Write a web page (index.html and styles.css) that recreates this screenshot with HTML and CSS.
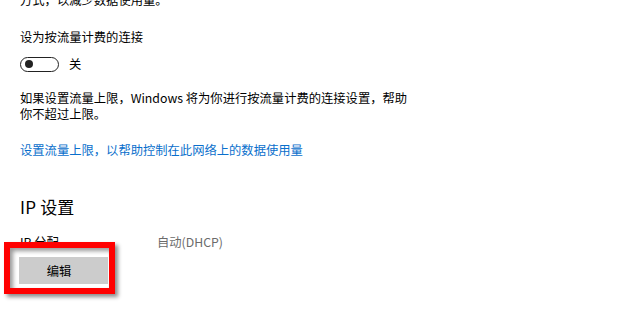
FILE: index.html
```html
<!DOCTYPE html>
<html lang="zh-CN">
<head>
<meta charset="utf-8">
<link rel="stylesheet" href="styles.css">
</head>
<body>
<main class="page">
  <p class="text first">方式，以减少数据使用量。</p>
  <p class="text title">设为按流量计费的连接</p>
  <div class="toggle-row">
    <span class="toggle"><span class="knob"></span></span>
    <span class="text">关</span>
  </div>
  <p class="text para">如果设置流量上限，Windows 将为你进行按流量计费的连接设置，帮助<br>你不超过上限。</p>
  <p class="text link">设置流量上限，以帮助控制在此网络上的数据使用量</p>
  <h2 class="heading">IP 设置</h2>
  <div class="kv">
    <span class="text">IP 分配</span>
    <span class="text value">自动(DHCP)</span>
  </div>
  <div class="btn-wrap">
    <button class="btn">编辑</button>
    <span class="highlight"></span>
  </div>
</main>
</body>
</html>
```
FILE: styles.css
```css
html, body {
  margin: 0;
  padding: 0;
  background: #ffffff;
}
body {
  width: 620px;
  height: 309px;
  overflow: hidden;
  font-family: "Noto Sans CJK SC", "Noto Sans", sans-serif;
  color: #000000;
}
.page {
  padding-left: 20px;
}
.text {
  margin: 0;
  font-size: 12.3px;
  line-height: 16.5px;
}
.first {
  margin-top: -7.75px;
}
.title {
  margin-top: 20px;
}
.toggle-row {
  margin-top: 10.75px;
  height: 16px;
  display: flex;
  align-items: center;
  gap: 10px;
}
.toggle {
  box-sizing: border-box;
  width: 39px;
  height: 15px;
  border: 1.6px solid #222;
  border-radius: 8px;
  display: flex;
  align-items: center;
  padding-left: 3.5px;
}
.knob {
  width: 8px;
  height: 8px;
  border-radius: 50%;
  background: #222;
}
.para {
  margin-top: 18.25px;
  line-height: 16.2px;
}
.link {
  margin-top: 19.5px;
  color: #0a6fcc;
}
.heading {
  margin: 37.5px 0 0;
  font-weight: normal;
  font-size: 17px;
  line-height: 22px;
  letter-spacing: 0.2px;
}
.kv {
  margin-top: 16.25px;
  display: grid;
  grid-template-columns: 137px auto;
}
.value {
  color: #6b6b6b;
}
.btn-wrap {
  position: relative;
  margin-top: 6.25px;
  margin-left: -1px;
  width: 89px;
  height: 27px;
}
.btn {
  display: block;
  width: 89px;
  height: 27px;
  border: none;
  background: #cccccc;
  color: #000;
  font-family: "Noto Sans CJK SC", sans-serif;
  font-size: 12.3px;
  padding: 0 9px 0 0;
}
.highlight {
  position: absolute;
  left: -15px;
  top: -15px;
  width: 111px;
  height: 52px;
  box-sizing: border-box;
  border: 6px solid #ff0000;
  box-shadow: 3px 3px 4px rgba(0,0,0,0.45), inset 3px 3px 4px rgba(0,0,0,0.4);
}
```
